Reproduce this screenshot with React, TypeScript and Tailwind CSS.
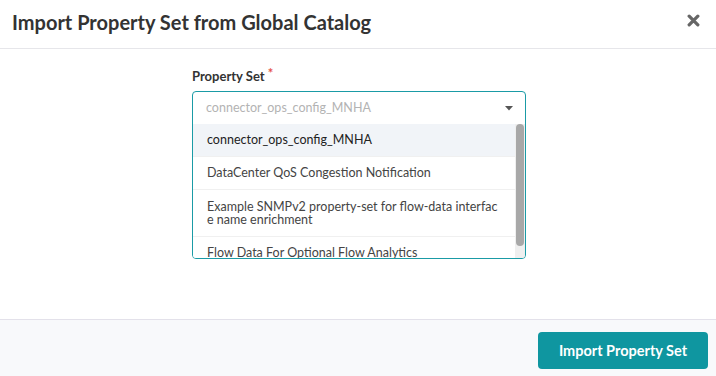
import React from "react";

const font = { fontFamily: "Lato, 'Open Sans', sans-serif" };

export default function App() {
  const options = [
    { label: "connector_ops_config_MNHA", active: true },
    { label: "DataCenter QoS Congestion Notification" },
    { label: "Example SNMPv2 property-set for flow-data interface name enrichment", multi: true },
    { label: "Flow Data For Optional Flow Analytics" },
  ];
  return (
    <div className="w-[716px] h-[376px] bg-white flex flex-col overflow-hidden" style={font}>
      <div className="h-[49px] border-b border-[#e6e6ea] flex items-center justify-between pl-[12px] pr-[16px]">
        <h1 className="text-[20px] font-bold text-[#333333] -mt-[4px]">
          Import Property Set from Global Catalog
        </h1>
        <svg width="13" height="13" viewBox="0 0 12 12" className="-mt-[8px]">
          <path d="M2 2 L10 10 M10 2 L2 10" stroke="#666" strokeWidth="3" strokeLinecap="round" />
        </svg>
      </div>
      <div className="flex-1 flex justify-center pt-[20px]">
        <div className="w-[334px] ml-[2px]">
          <div className="text-[13px] font-bold text-[#333] h-[22px] leading-[14px]">
            Property Set <span className="text-[#e5534b] relative -top-[3px]">*</span>
          </div>
          <div className="border border-[#1a9ba6] rounded-[4px] overflow-hidden">
            <div className="h-[32px] flex items-center justify-between pl-[13px] pr-[12px]">
              <span className="text-[12.5px] text-[#b3b3b3]">connector_ops_config_MNHA</span>
              <svg width="8" height="5" viewBox="0 0 8 5">
                <path d="M0 0 L8 0 L4 4.5 Z" fill="#555" />
              </svg>
            </div>
            <div className="h-[134px] flex overflow-hidden">
              <div className="flex-1 flex flex-col min-w-0">
                {options.map((o, i) => (
                  <div
                    key={i}
                    className={`${o.active ? "bg-[#f1f4f8]" : "bg-white"} ${
                      o.multi ? "h-[47px] leading-[13px]" : "h-[33px] leading-[16px]"
                    } flex items-center pl-[14px] pr-[14px] border-b border-[#f0f0f0] text-[12.5px] shrink-0`}
                  >
                    <span className={`break-all ${o.active ? "text-[#222]" : "text-[#444]"}`}>{o.label}</span>
                  </div>
                ))}
              </div>
              <div className="w-[10px] bg-[#efefef] flex flex-col pl-[1px] pr-[1px]">
                <div className="h-[122px] bg-[#a8a8a8] rounded-[4px]" />
              </div>
            </div>
          </div>
        </div>
      </div>
      <div className="h-[57px] border-t border-[#e3e1ea] bg-[#f8f9fb] flex items-start justify-end pr-[8px] pt-[12px]">
        <button className="w-[170px] h-[37px] rounded-[4px] bg-[#0f96a0] text-white text-[14.5px] font-bold">
          Import Property Set
        </button>
      </div>
    </div>
  );
}
